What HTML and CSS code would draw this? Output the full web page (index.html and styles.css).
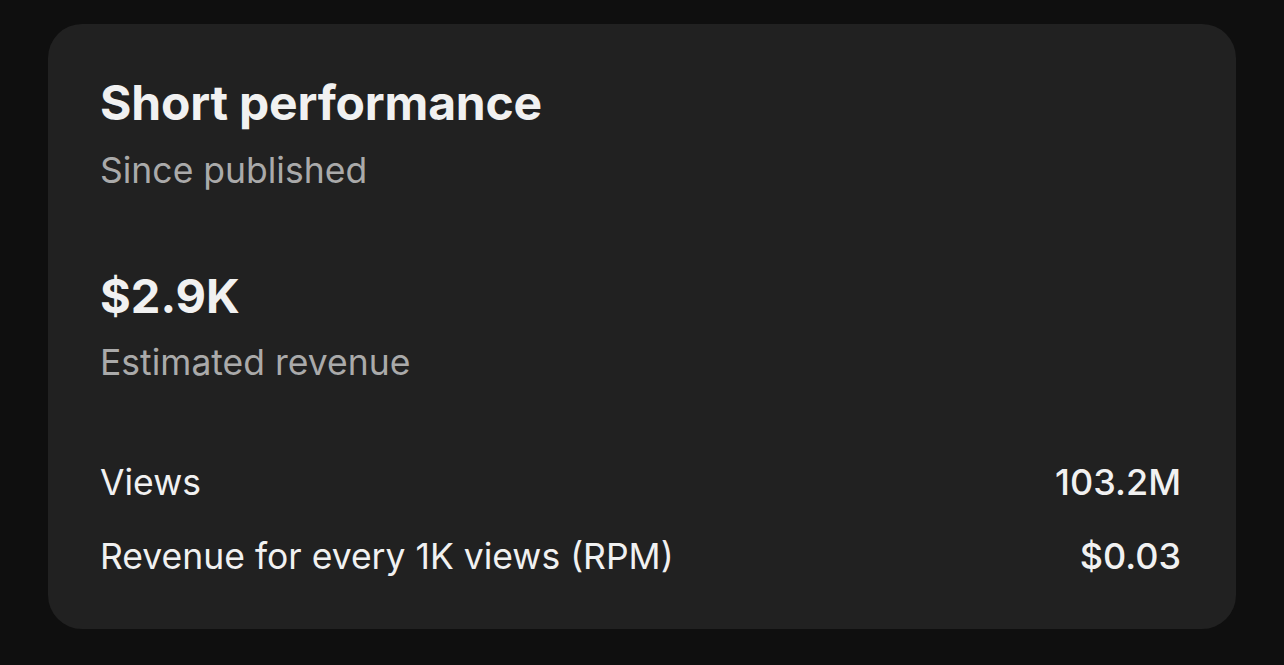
FILE: index.html
```html
<!DOCTYPE html>
<html>
<head>
<meta charset="utf-8">
<link rel="stylesheet" href="styles.css">
</head>
<body>
<div class="page">
  <section class="card">
    <h1 class="title">Short performance</h1>
    <p class="subtitle">Since published</p>
    <div class="revenue">
      <div class="revenue-value">$2.9K</div>
      <div class="revenue-label">Estimated revenue</div>
    </div>
    <div class="stats">
      <div class="stat-row"><span class="stat-label">Views</span><span class="stat-value">103.2M</span></div>
      <div class="stat-row"><span class="stat-label">Revenue for every 1K views (RPM)</span><span class="stat-value">$0.03</span></div>
    </div>
  </section>
</div>
</body>
</html>
```
FILE: styles.css
```css
* { box-sizing: border-box; }
html, body { margin: 0; padding: 0; }
body {
  background: #0f0f0f;
  font-family: Inter, "Noto Sans", sans-serif;
  color: #f1f1f1;
  width: 1284px;
  height: 665px;
  overflow: hidden;
}
.page {
  padding: 24px 48px 36px 48px;
}
.card {
  background: #212121;
  border-radius: 34px;
  height: 605px;
  padding: 50px 55px 0 52px;
  display: flex;
  flex-direction: column;
}
.title {
  margin: 0;
  font-size: 48px;
  font-weight: 700;
  line-height: 58px;
  letter-spacing: -0.2px;
}
.subtitle {
  margin: 17px 0 0 0;
  font-size: 35.5px;
  font-weight: 400;
  line-height: 44px;
  color: #aaaaaa;
}
.revenue {
  margin-top: 75px;
}
.revenue-value {
  font-size: 47px;
  font-weight: 700;
  line-height: 56px;
}
.revenue-label {
  margin-top: 17px;
  font-size: 35.5px;
  line-height: 44px;
  color: #aaaaaa;
}
.stats {
  margin-top: 75px;
  display: flex;
  flex-direction: column;
  gap: 29px;
}
.stat-row {
  display: flex;
  justify-content: space-between;
  align-items: baseline;
  font-size: 35.5px;
  line-height: 44px;
}
.stat-value {
  font-size: 36px;
  font-weight: 500;
}
```
